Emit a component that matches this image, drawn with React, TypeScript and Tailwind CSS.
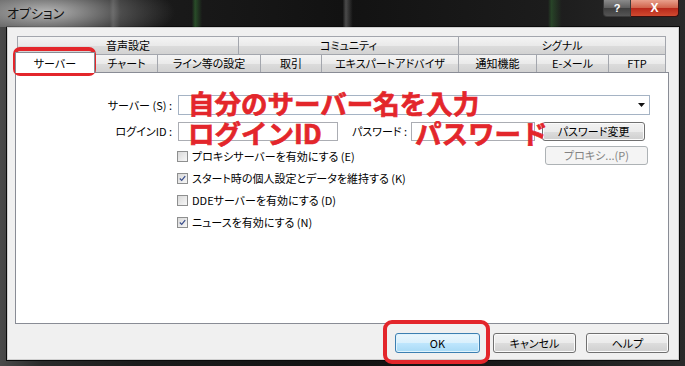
import React from "react";

const ui = "font-['Noto_Sans_CJK_JP','Noto_Sans',sans-serif]";

function Tab({ label, w }: { label: string; w: number }) {
  return (
    <div
      className="h-[18px] shrink-0 flex items-center justify-center border-t border-l border-[#a3a6ad] bg-[linear-gradient(#f4f4f4,#eaeaea_50%,#dcdcdc_51%,#d2d2d2)] text-[11px] leading-none text-black [font-feature-settings:'palt']"
      style={{ width: w }}
    >
      {label}
    </div>
  );
}

function Check({ label, checked }: { label: string; checked?: boolean }) {
  return (
    <div className="h-[22px] flex items-center gap-[4px]">
      <div className="w-[11px] h-[11px] border border-[#8e8f8f] bg-[linear-gradient(135deg,#d9d9d9,#f7f7f7)] p-[1px] flex items-center justify-center">
        {checked && (
          <svg width="9" height="9" viewBox="0 0 9 9">
            <path d="M1 4.5 L3.5 7 L8 1.5" fill="none" stroke="#3b4f8c" strokeWidth="1.6" />
          </svg>
        )}
      </div>
      <span className="text-[11px] leading-none text-black [font-feature-settings:'palt']">{label}</span>
    </div>
  );
}

function Btn({
  label,
  w,
  h = 19,
  disabled,
  primary,
}: {
  label: string;
  w: number;
  h?: number;
  disabled?: boolean;
  primary?: boolean;
}) {
  const base =
    "shrink-0 flex items-center justify-center rounded-[3px] border text-[11px] leading-none [font-feature-settings:'palt']";
  const cls = primary
    ? "border-[#3c7fb1] bg-[linear-gradient(#eaf6fd,#d9f0fc_50%,#bee6fd_51%,#a7d9f5)] text-black shadow-[inset_0_0_0_1px_#dff3fd]"
    : disabled
    ? "border-[#adb2b5] bg-[#f4f4f4] text-[#838383]"
    : "border-[#707070] bg-[linear-gradient(#f2f2f2,#ebebeb_50%,#dddddd_51%,#cfcfcf)] text-black shadow-[inset_0_0_0_1px_#fbfbfb]";
  return (
    <div className={`${base} ${cls}`} style={{ width: w, height: h }}>
      {label}
    </div>
  );
}

const red =
  "absolute text-[26.5px] font-bold leading-[24px] text-[#e3262b] whitespace-nowrap [-webkit-text-stroke:0.7px_#e3262b]";

export default function App() {
  return (
    <div
      className={`${ui} relative w-[685px] h-[366px] overflow-hidden flex flex-col bg-[linear-gradient(90deg,#4a4a4a,#2a2a2a_6%,#1b1b1b_20%,#121212_50%,#1c1c1c_80%,#2a2a2a)]`}
    >
      {/* title bar */}
      <div className="relative h-[27px] shrink-0 flex items-start bg-[radial-gradient(ellipse_130px_36px_at_45px_12px,rgba(190,190,190,0.95),rgba(120,120,120,0.5)_60%,transparent),linear-gradient(90deg,transparent_16%,rgba(160,160,160,0.35)_16.5%,transparent_17.5%,transparent_28%,rgba(60,140,60,0.45)_28.5%,transparent_29.5%,transparent_50%,rgba(180,180,180,0.35)_50.5%,transparent_51.5%,transparent_80%,rgba(60,140,60,0.35)_80.5%,transparent_82%)]">
        <div className="pl-[7px] pt-[6px] text-[13px] leading-none text-[#111] [font-feature-settings:'palt']">
          オプション
        </div>
        <div className="ml-auto mr-[6px] flex">
          <div className="w-[28px] h-[17px] rounded-bl-[4px] border border-t-0 border-[#3a3a3a] bg-[linear-gradient(#8a8a8a,#5e5e5e_50%,#3e3e3e_51%,#555)] flex items-center justify-center text-white text-[11px] font-bold leading-none font-['Liberation_Sans',sans-serif]">
            ?
          </div>
          <div className="w-[48px] h-[17px] rounded-br-[4px] border border-t-0 border-l-0 border-[#3a1010] bg-[linear-gradient(#e8a08c,#d0624a_50%,#b8281a_51%,#d04a30)] flex items-center justify-center text-white text-[12px] font-bold leading-none font-['Liberation_Sans',sans-serif]">
            X
          </div>
        </div>
      </div>

      {/* client area */}
      <div className="flex-1 mx-[6px] mb-[6px] ml-[7px] border border-[#cfcfcf] shadow-[0_0_0_1px_#0a0a0a] bg-[#f0f0f0] flex flex-col pl-[7px] pt-[8px]">
        {/* tab row 1 */}
        <div className="flex ml-[2px]">
          <Tab label="音声設定" w={221} />
          <Tab label="コミュニティ" w={220} />
          <div className="border-r border-[#a3a6ad]">
            <Tab label="シグナル" w={207} />
          </div>
        </div>
        {/* tab row 2 */}
        <div className="flex items-end h-[18px] ml-[2px]">
          <div className="relative z-10 -ml-[2px] -mb-[1px] w-[80px] h-[21px] shrink-0 bg-white border border-b-0 border-[#898c95] flex items-center justify-center text-[11px] leading-none text-black [font-feature-settings:'palt']">
            サーバー
          </div>
          <Tab label="チャート" w={62} />
          <Tab label="ライン等の設定" w={103} />
          <Tab label="取引" w={61} />
          <Tab label="エキスパートアドバイザ" w={137} />
          <Tab label="通知機能" w={78} />
          <Tab label="E-メール" w={72} />
          <div className="border-r border-[#a3a6ad]">
            <Tab label="FTP" w={57} />
          </div>
        </div>

        {/* panel */}
        <div className="relative w-[654px] h-[252px] shrink-0 bg-white border border-[#898c95] flex flex-col text-black">
          {/* server row */}
          <div className="flex items-center mt-[22px] h-[20px]">
            <div className="w-[156px] text-right text-[11px] leading-none [font-feature-settings:'palt']">
              サーバー (S) :
            </div>
            <div className="ml-[6px] w-[472px] h-[20px] border border-[#a5b3c4] bg-white flex items-center justify-end pr-[4px]">
              <svg width="7" height="4" viewBox="0 0 7 4">
                <path d="M0 0 L7 0 L3.5 4 Z" fill="#111" />
              </svg>
            </div>
          </div>
          {/* login row */}
          <div className="flex items-center mt-[7px] h-[19px]">
            <div className="w-[156px] text-right text-[11px] leading-none [font-feature-settings:'palt']">
              ログインID :
            </div>
            <div className="ml-[6px] w-[160px] h-[19px] border border-[#abadb3] bg-white" />
            <div className="ml-[14px] text-[11px] leading-none [font-feature-settings:'palt']">パスワード :</div>
            <div className="ml-[4px] w-[124px] h-[19px] border border-[#abadb3] bg-white" />
            <div className="ml-[7px]">
              <Btn label="パスワード変更" w={103} />
            </div>
          </div>
          {/* options */}
          <div className="flex mt-[4px] pl-[161px]">
            <div className="w-[368px] flex flex-col">
              <Check label="プロキシサーバーを有効にする (E)" />
              <Check label="スタート時の個人設定とデータを維持する (K)" checked />
              <Check label="DDEサーバーを有効にする (D)" />
              <Check label="ニュースを有効にする (N)" checked />
            </div>
            <div className="mt-[1px]">
              <Btn label="プロキシ...(P)" w={103} disabled />
            </div>
          </div>

          {/* red annotations */}
          <div className={`${red} left-[172px] top-[18px]`}>自分のサーバー名を入力</div>
          <div className={`${red} left-[172px] top-[48px]`}>ログインID</div>
          <div className={`${red} left-[399px] top-[48px]`}>パスワード</div>
        </div>

        {/* bottom buttons */}
        <div className="flex justify-end mt-[9px] w-[654px]">
          <Btn label="OK" w={85} h={20} primary />
          <div className="ml-[13px]">
            <Btn label="キャンセル" w={83} h={20} />
          </div>
          <div className="ml-[10px]">
            <Btn label="ヘルプ" w={83} h={20} />
          </div>
        </div>
      </div>

      {/* red outline overlays */}
      <div className="absolute left-[13px] top-[47px] w-[83px] h-[29px] rounded-[7px] border-[4px] border-[#e3262b]" />
      <div className="absolute left-[383px] top-[320px] w-[107px] h-[44px] rounded-[9px] border-[4px] border-[#e3262b]" />
    </div>
  );
}
